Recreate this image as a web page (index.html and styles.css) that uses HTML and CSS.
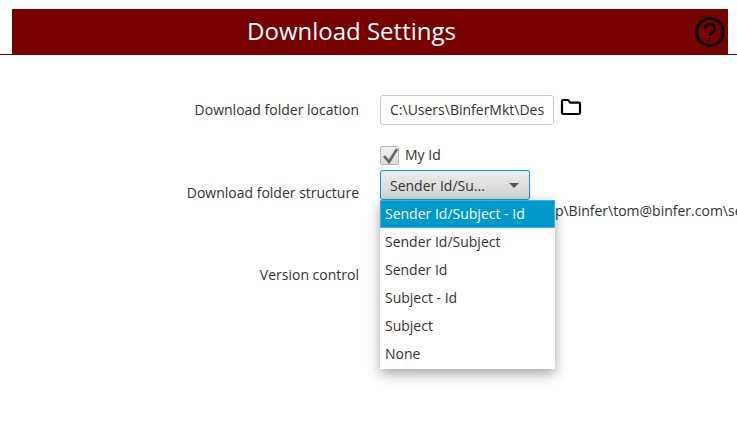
FILE: index.html
```
<!DOCTYPE html>
<html lang="en">
<head>
<meta charset="utf-8">
<title>Download Settings</title>
<link rel="stylesheet" href="styles.css">
</head>
<body>
<header class="header">
  <div class="header-bar">
    <h1 class="title">Download Settings</h1>
    <svg class="help" width="32" height="32" viewBox="0 0 32 32" aria-hidden="true">
      <circle cx="16" cy="16" r="13.5" fill="none" stroke="#000" stroke-width="3"/>
      <path d="M11.2 12.8c0-3 2.1-4.7 4.9-4.7s4.8 1.7 4.8 4.2c0 3.9-4.7 3.9-4.7 7.6" fill="none" stroke="#000" stroke-width="2.6"/>
      <rect x="14.6" y="21.6" width="2.9" height="2.9" fill="#000"/>
    </svg>
  </div>
</header>
<main class="form">
  <div class="row row-location">
    <div class="label">Download folder location</div>
    <div class="control control-inline">
      <div class="text-input">C:\Users\BinferMkt\Des</div>
      <svg class="folder" width="22" height="18" viewBox="0 0 22 18" aria-hidden="true">
        <path d="M2 5V3.2C2 2.5 2.5 2 3.2 2h5l2 2.6h8.6c.8 0 1.2.5 1.2 1.2v9c0 .7-.4 1.2-1.2 1.2H3.2C2.500 16 2 15.500 2 14.800z" fill="none" stroke="#000" stroke-width="2.200"/>
      </svg>
    </div>
  </div>
  <div class="row row-structure">
    <div class="label label-structure">Download folder structure</div>
    <div class="control">
      <label class="check-line">
        <span class="checkbox">
          <svg width="22" height="20" viewBox="0 0 22 20" aria-hidden="true"><path d="M5 11l5 6 8-13" fill="none" stroke="#666" stroke-width="2.600"/></svg>
        </span>
        <span class="check-text">My Id</span>
      </label>
      <div class="select">
        <span>Sender Id/Su...</span>
        <span class="caret"></span>
      </div>
      <div class="path-line">C:\Users\BinferMkt\Desktop\Binfer\tom@binfer.com\sender</div>
      <ul class="menu">
        <li class="menu-item selected">Sender Id/Subject - Id</li>
        <li class="menu-item">Sender Id/Subject</li>
        <li class="menu-item">Sender Id</li>
        <li class="menu-item">Subject - Id</li>
        <li class="menu-item">Subject</li>
        <li class="menu-item">None</li>
      </ul>
    </div>
  </div>
  <div class="row row-version">
    <div class="label">Version control</div>
    <div class="control"></div>
  </div>
</main>
</body>
</html>
```
FILE: styles.css
```
* { box-sizing: border-box; }
html, body { margin: 0; padding: 0; }
body {
  width: 737px;
  height: 434px;
  overflow: hidden;
  background: #fff;
  font-family: "Open Sans", sans-serif;
  font-size: 14px;
  color: #333;
}
.header {
  padding: 9px 9px 0 12px;
  border-bottom: 1px solid #770000;
}
.header-bar {
  height: 45px;
  background: #770000;
  display: flex;
  align-items: center;
  justify-content: center;
  position: relative;
}
.title {
  margin: 0 37px 0 0;
  font-size: 24px;
  font-weight: 400;
  color: #fff;
  line-height: 43px;
  padding-bottom: 2px;
}
.help { position: absolute; right: 2px; top: 7px; }
.form { padding-top: 40px; }
.row { display: grid; grid-template-columns: 359px 1fr; column-gap: 21px; }
.label { text-align: right; line-height: 20px; }
.control { position: relative; min-width: 0; }
.control-inline { display: flex; align-items: flex-start; gap: 6px; }
.row-location .label { padding-top: 5px; }
.text-input {
  width: 174px;
  height: 30px;
  border: 1px solid #ccc;
  border-radius: 3px;
  padding: 0 9px;
  line-height: 28px;
  white-space: nowrap;
  overflow: hidden;
  background: #fff;
}
.folder { margin-top: 3px; }
.row-structure { margin-top: 20px; height: 120px; }
.label-structure { padding-top: 38px; }
.check-line { display: flex; align-items: center; gap: 6px; height: 20px; padding-top: 1px; }
.checkbox {
  width: 19px;
  height: 19px;
  border: 1px solid #bbb;
  border-radius: 2px;
  background: linear-gradient(#f2f2f2, #dcdcdc);
  display: block;
  position: relative;
}
.checkbox svg { position: absolute; left: -2px; top: -2px; }
.check-text { line-height: 20px; margin-top: -2px; }
.select {
  margin-top: 5px;
  width: 150px;
  height: 30px;
  border: 1px solid #0d9ccb;
  border-radius: 3px;
  box-shadow: 0 0 1px #5cc4e4;
  background: linear-gradient(#ececec, #d2d2d2);
  display: flex;
  align-items: center;
  justify-content: space-between;
  padding: 0 9px;
}
.caret {
  width: 0;
  height: 0;
  border-left: 5px solid transparent;
  border-right: 5px solid transparent;
  border-top: 5px solid #555;
  margin-right: 1px;
}
.path-line {
  margin-top: 1px;
  line-height: 20px;
  white-space: nowrap;
}
.menu {
  position: absolute;
  left: 0;
  top: 55px;
  width: 175px;
  margin: 0;
  padding: 0 0 1px;
  list-style: none;
  background: #fff;
  box-shadow: 0 5px 12px rgba(0, 0, 0, .35);
}
.menu-item {
  height: 28px;
  line-height: 28px;
  padding-left: 5px;
  white-space: nowrap;
}
.menu-item.selected {
  background: #0099cc;
  color: #fff;
  border: 1px solid #3db0d8;
  padding-left: 4px;
  line-height: 26px;
}
```
